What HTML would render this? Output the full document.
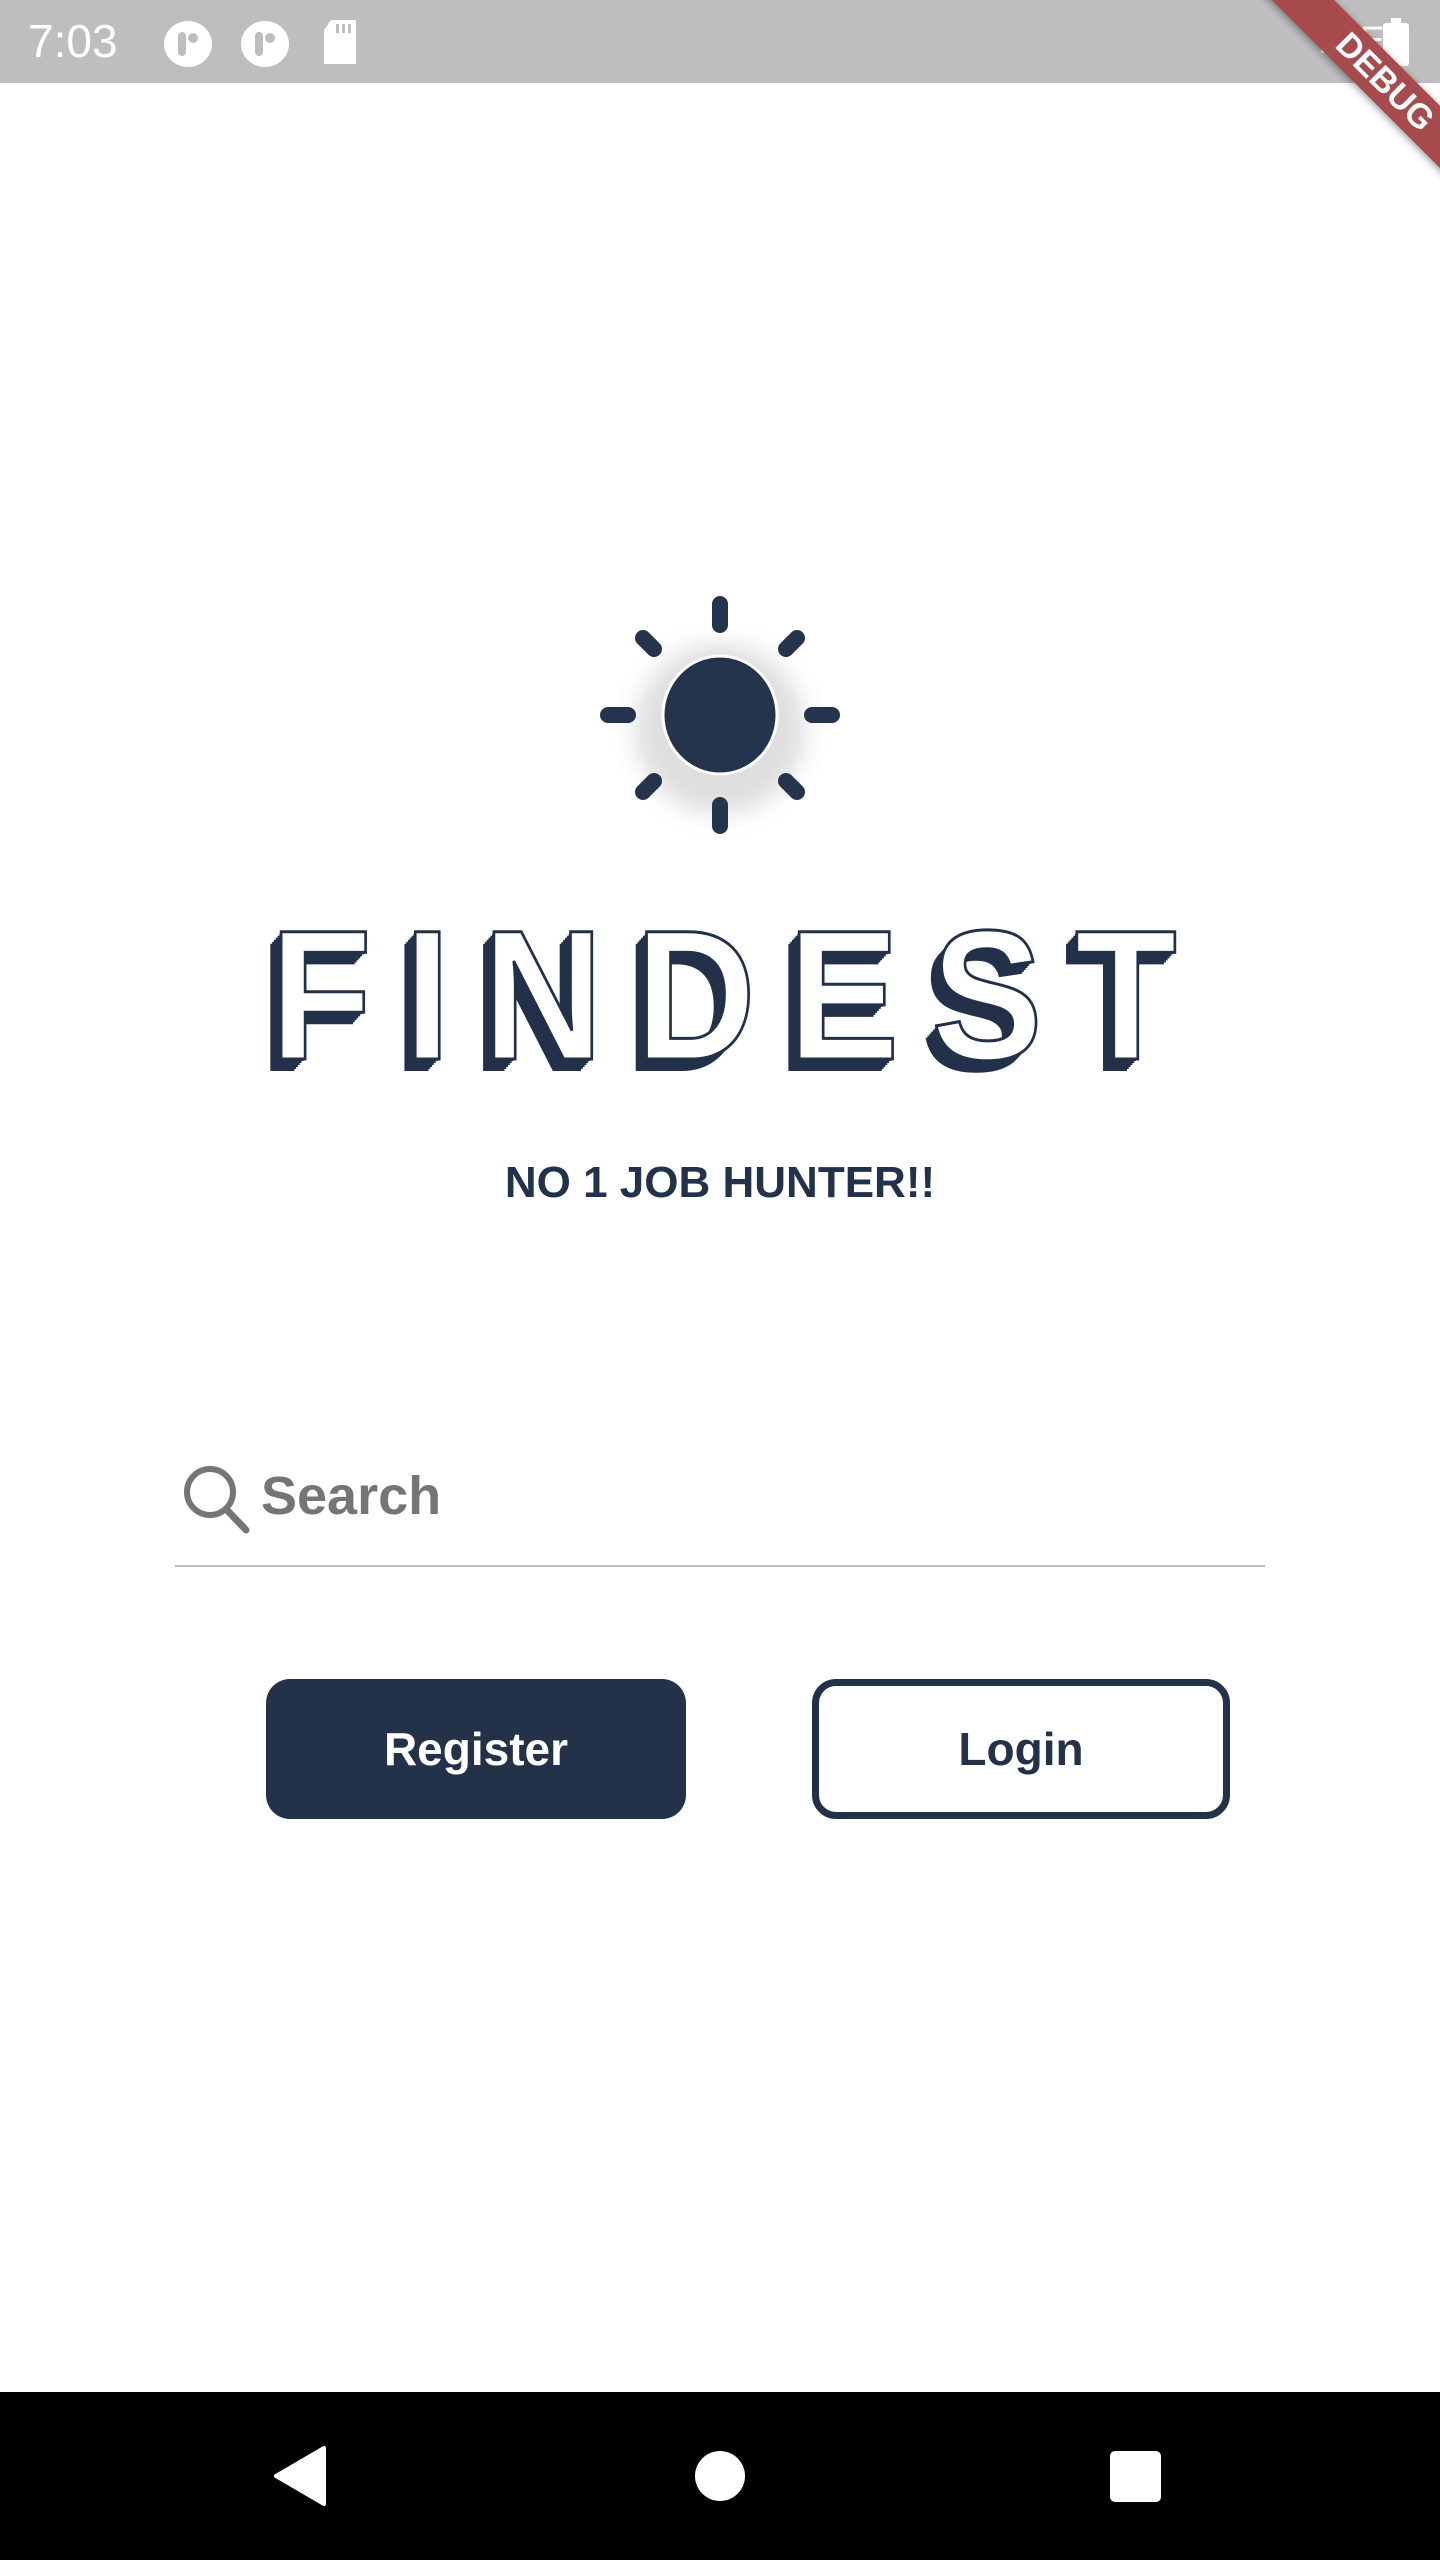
<!DOCTYPE html>
<html><head><meta charset="utf-8"><style>
html,body{margin:0;padding:0;background:#fff;}
body{width:1440px;height:2560px;position:relative;overflow:hidden;font-family:"Liberation Sans",sans-serif;}
.status{position:absolute;left:0;top:0;width:1440px;height:83px;background:#bebebe;}
.time{position:absolute;left:28px;top:14px;color:#fff;font-size:46px;}
.nav{position:absolute;left:0;top:2392px;width:1440px;height:168px;background:#000;}
.abs{position:absolute;}
.logo{position:absolute;left:270px;top:896px;white-space:nowrap;font-weight:bold;font-size:185px;line-height:200px;color:#fff;-webkit-text-stroke:3px #22304a;letter-spacing:36px;transform:scaleX(0.9);transform-origin:left top;text-shadow:-2px 2px 0 #22304a,-4px 4px 0 #22304a,-6px 6px 0 #22304a,-8px 8px 0 #22304a,-10px 10px 0 #22304a,-12px 12px 0 #22304a;}
.tag{position:absolute;left:0;width:1440px;top:1158px;text-align:center;font-weight:bold;font-size:44px;color:#23324b;}
.search{position:absolute;left:261px;top:1465px;font-weight:bold;font-size:54px;color:#757575;}
.line{position:absolute;left:175px;top:1565px;width:1090px;height:2px;background:#bdbdbd;}
.btn{position:absolute;top:1679px;height:140px;border-radius:24px;box-sizing:border-box;display:flex;align-items:center;justify-content:center;font-weight:bold;font-size:46px;}
</style></head><body>
<div class="status">
<div class="time">7:03</div>
<svg class="abs" style="left:163px;top:20px" width="50" height="48"><ellipse cx="25" cy="24" rx="24" ry="23" fill="#fff"/><rect x="15" y="12" width="8" height="24" rx="4" fill="#bebebe"/><circle cx="30" cy="18" r="5" fill="#bebebe"/></svg>
<svg class="abs" style="left:240px;top:20px" width="50" height="48"><ellipse cx="25" cy="24" rx="24" ry="23" fill="#fff"/><rect x="15" y="12" width="8" height="24" rx="4" fill="#bebebe"/><circle cx="30" cy="18" r="5" fill="#bebebe"/></svg>
<svg class="abs" style="left:322px;top:20px" width="36" height="46"><path d="M9 0H34V44H2V10Z" fill="#fff"/><rect x="14" y="4" width="3" height="9" fill="#bebebe"/><rect x="20" y="4" width="3" height="9" fill="#bebebe"/><rect x="26" y="4" width="3" height="9" fill="#bebebe"/></svg>
<div class="abs" style="left:1318px;top:20px;color:#fff;font-size:38px;">LTE</div>
<svg class="abs" style="left:1383px;top:18px" width="26" height="48"><rect x="8" y="0" width="10" height="6" fill="#fff"/><rect x="0" y="5" width="26" height="43" rx="3" fill="#fff"/></svg>
</div>
<div class="abs" style="left:1215px;top:60px;width:340px;height:44px;background:#a84b4f;transform:rotate(45deg);transform-origin:center;box-shadow:0 2px 8px rgba(0,0,0,.4);color:#fff;font-weight:bold;font-size:34px;text-align:center;line-height:44px;">DEBUG</div>

<svg class="abs" style="left:570px;top:570px" width="300" height="300" viewBox="0 0 300 300">
<defs><filter id="s" x="-50%" y="-50%" width="200%" height="200%"><feGaussianBlur stdDeviation="12"/></filter></defs>
<g transform="translate(150,145)">
<circle r="85" fill="rgba(0,0,0,.13)" filter="url(#s)" transform="translate(0,14)"/>
<ellipse rx="57" ry="59" fill="#25344d" stroke="#fff" stroke-width="3"/>
<g stroke="#25344d" stroke-width="16" stroke-linecap="round">
<line x1="0" y1="-111" x2="0" y2="-90"/><line x1="0" y1="111" x2="0" y2="90"/>
<line x1="-112" y1="0" x2="-92" y2="0"/><line x1="112" y1="0" x2="92" y2="0"/>
<line x1="-77" y1="-77" x2="-66" y2="-66"/><line x1="77" y1="-77" x2="66" y2="-66"/>
<line x1="-77" y1="77" x2="-66" y2="66"/><line x1="77" y1="77" x2="66" y2="66"/>
</g></g></svg>

<div class="logo">FINDEST</div>
<div class="tag">NO 1 JOB HUNTER!!</div>

<svg class="abs" style="left:180px;top:1462px" width="72" height="72" viewBox="0 0 72 72"><circle cx="30" cy="30" r="23" fill="none" stroke="#757575" stroke-width="6"/><line x1="46" y1="47" x2="66" y2="68" stroke="#757575" stroke-width="7" stroke-linecap="round"/></svg>
<div class="search">Search</div>
<div class="line"></div>

<div class="btn" style="left:266px;width:420px;background:#233249;color:#fff;">Register</div>
<div class="btn" style="left:812px;width:418px;border:7px solid #233249;color:#233249;background:#fff;">Login</div>

<div class="nav">
<svg class="abs" style="left:272px;top:54px" width="56" height="60"><path d="M52 2V58L4 30Z" fill="#fff" stroke="#fff" stroke-linejoin="round" stroke-width="4"/></svg>
<div class="abs" style="left:695px;top:59px;width:50px;height:50px;border-radius:50%;background:#fff;"></div>
<div class="abs" style="left:1110px;top:59px;width:51px;height:51px;border-radius:5px;background:#fff;"></div>
</div>
</body></html>
